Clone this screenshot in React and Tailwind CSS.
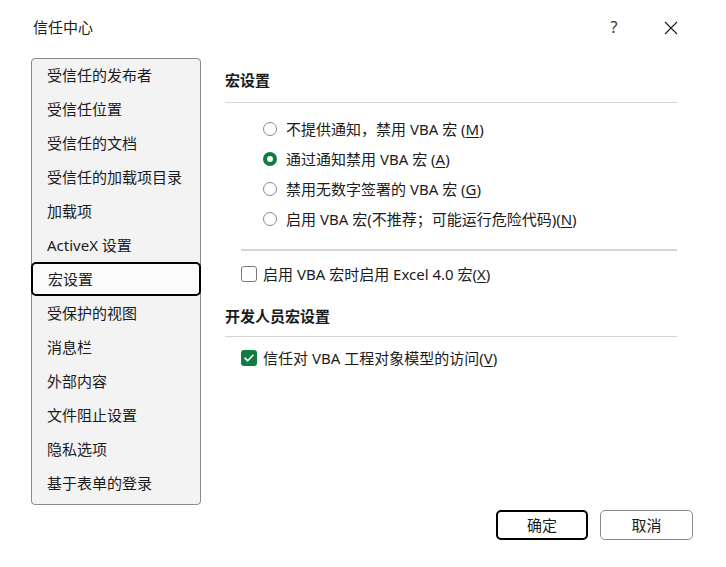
const FONT = "font-['Noto_Sans','Noto_Sans_CJK_SC',sans-serif]"

const navItems = [
  "受信任的发布者",
  "受信任位置",
  "受信任的文档",
  "受信任的加载项目录",
  "加载项",
  "ActiveX 设置",
  "宏设置",
  "受保护的视图",
  "消息栏",
  "外部内容",
  "文件阻止设置",
  "隐私选项",
  "基于表单的登录",
]

const radios = [
  { pre: "不提供通知，禁用 VBA 宏 (", key: "M", post: ")" },
  { pre: "通过通知禁用 VBA 宏 (", key: "A", post: ")", checked: true },
  { pre: "禁用无数字签署的 VBA 宏 (", key: "G", post: ")" },
  { pre: "启用 VBA 宏(不推荐；可能运行危险代码)(", key: "N", post: ")" },
]

function Radio({ checked }) {
  return checked ? (
    <span className="w-[14px] h-[14px] rounded-full border-[4px] border-[#107c41] bg-white shrink-0" />
  ) : (
    <span className="w-[14px] h-[14px] rounded-full border border-[#8a8a8a] bg-white shrink-0" />
  )
}

function Checkbox({ checked }) {
  if (!checked) return <span className="w-[16px] h-[16px] rounded-[3px] border border-[#7a7a7a] bg-white shrink-0" />
  return (
    <span className="w-[16px] h-[16px] rounded-[3px] bg-[#107c41] shrink-0 flex items-center justify-center">
      <svg width="10" height="8" viewBox="0 0 10 8" fill="none">
        <path d="M1 4.2 3.7 6.8 9 1.3" stroke="white" strokeWidth="1.6" strokeLinecap="round" strokeLinejoin="round" />
      </svg>
    </span>
  )
}

export default function App() {
  return (
    <div className={`w-[726px] h-[567px] bg-white text-[15px] leading-[20px] text-[#1b1b1b] flex flex-col ${FONT}`}>

      {/* Title bar */}
      <div className="flex pl-[33px] pt-[17px] h-[58px] items-start">
        <span className="flex-1">信任中心</span>
        <span className="w-[14px] text-center text-[16px] text-[#333] mr-[43px]">?</span>
        <svg width="14" height="14" viewBox="0 0 14 14" className="mt-[4px] mr-[48px]">
          <path d="M1 1 13 13M13 1 1 13" stroke="#222" strokeWidth="1.2" />
        </svg>
      </div>

      <div className="flex pl-[31px]">
        {/* Nav */}
        <div className="w-[170px] border border-[#8a8a8a] rounded-[4px] bg-[#f3f3f3] pb-[4px] flex flex-col">
          <div className="-mt-px flex flex-col">
            {navItems.map(item => (
              item === "宏设置" ? (
                <div key={item} className="h-[34px] -mx-px border-2 border-black rounded-[5px] bg-[#fbfbfb] flex items-center pl-[15px]">
                  {item}
                </div>
              ) : (
                <div key={item} className="h-[34px] flex items-center pl-[15px]">{item}</div>
              )
            ))}
          </div>
        </div>

        {/* Content */}
        <div className="ml-[24px] w-[452px] flex flex-col">
          <div className="mt-[12px] font-bold">宏设置</div>
          <div className="mt-[12px] border-t border-[#d6d6d6]" />
          <div className="mt-[11px] pl-[38px] flex flex-col">
            {radios.map(r => (
              <div key={r.key} className="h-[30px] flex items-center gap-[9px]">
                <Radio checked={r.checked} />
                <span>{r.pre}<span className="underline underline-offset-2">{r.key}</span>{r.post}</span>
              </div>
            ))}
          </div>
          <div className="mt-[15px] ml-[16px] border-t-2 border-[#d4d4d4]" />
          <div className="mt-[8px] ml-[16px] h-[30px] flex items-center gap-[6px]">
            <Checkbox />
            <span>启用 VBA 宏时启用 Excel 4.0 宏(<span className="underline underline-offset-2">X</span>)</span>
          </div>
          <div className="mt-[17px] font-bold">开发人员宏设置</div>
          <div className="mt-[10px] border-t border-[#d6d6d6]" />
          <div className="mt-[6px] ml-[16px] h-[30px] flex items-center gap-[6px]">
            <Checkbox checked />
            <span>信任对 VBA 工程对象模型的访问(<span className="underline underline-offset-2">V</span>)</span>
          </div>
        </div>
      </div>

      {/* Footer */}
      <div className="flex justify-end gap-[12px] pr-[33px] mt-[5px]">
        <button className="w-[92px] h-[30px] border-2 border-black rounded-[5px] bg-white">确定</button>
        <button className="w-[93px] h-[30px] border border-[#8a8a8a] rounded-[5px] bg-white">取消</button>
      </div>
    </div>
  )
}
